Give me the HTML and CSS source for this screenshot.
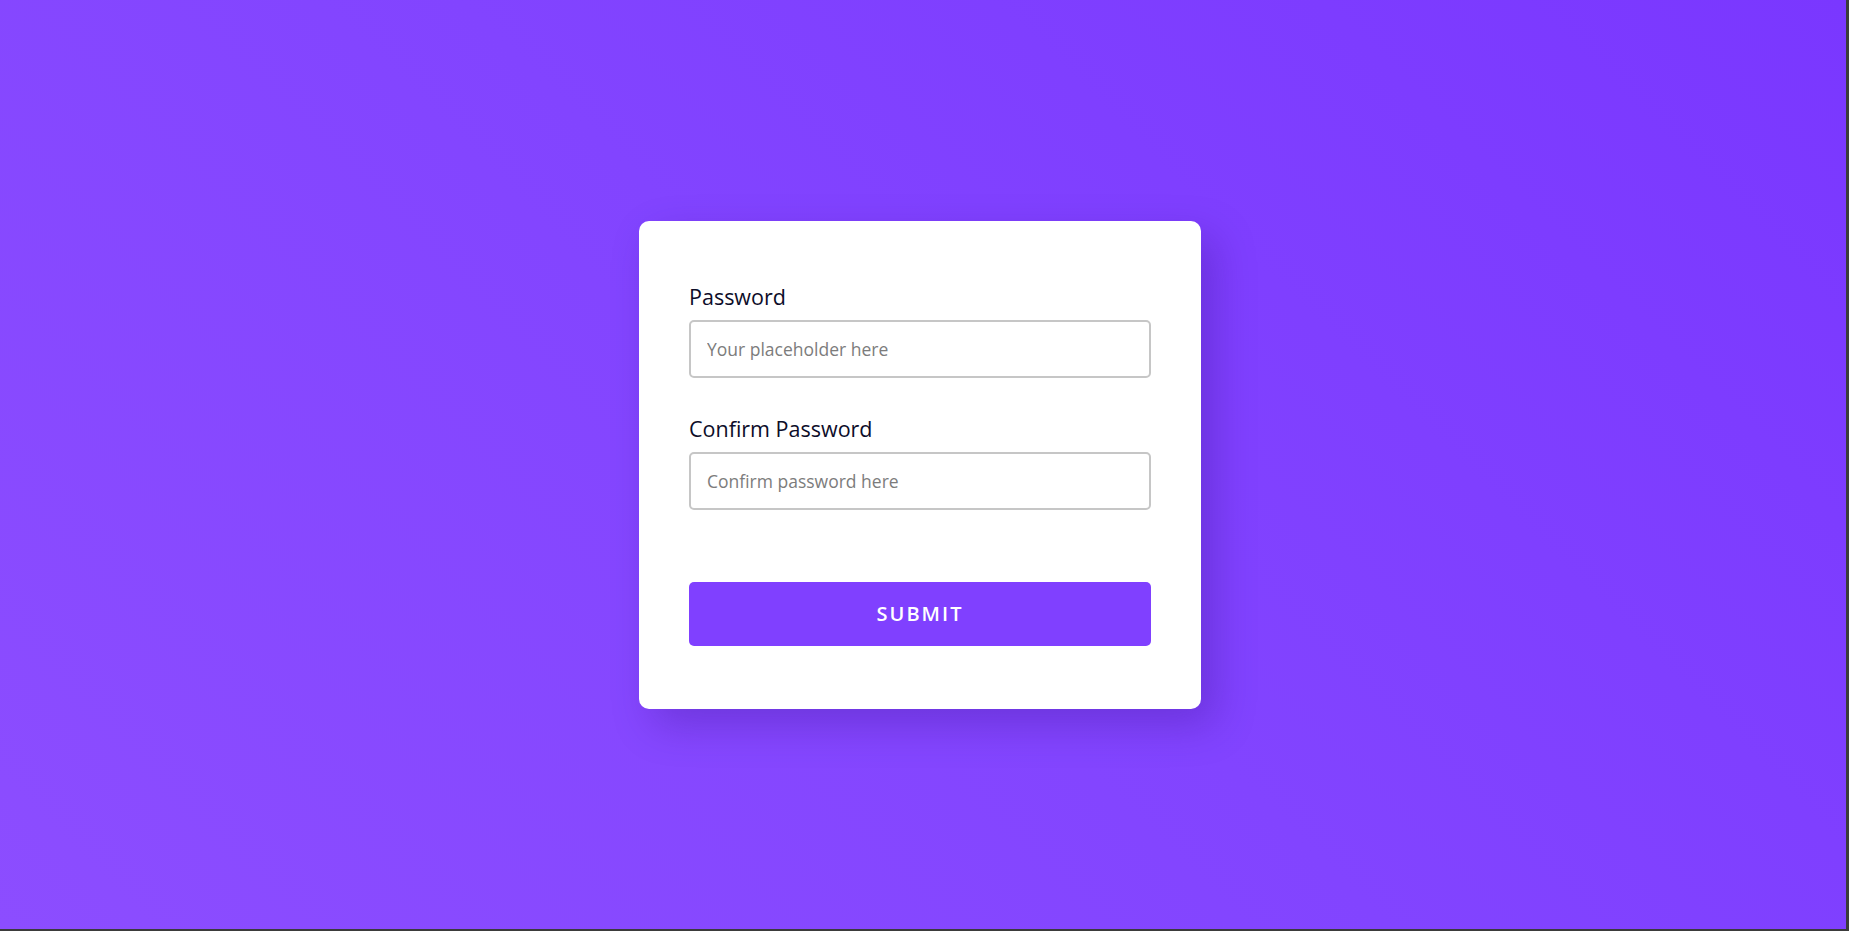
FILE: index.html
```html
<!DOCTYPE html>
<html lang="en">
<head>
<meta charset="utf-8">
<title>Password</title>
<link rel="stylesheet" href="styles.css">
</head>
<body>
<main class="page">
  <form class="card">
    <div class="field">
      <label class="label" for="pw">Password</label>
      <input class="input" id="pw" type="password" placeholder="Your placeholder here">
    </div>
    <div class="field">
      <label class="label" for="cpw">Confirm Password</label>
      <input class="input" id="cpw" type="password" placeholder="Confirm password here">
    </div>
    <button class="submit" type="button">SUBMIT</button>
  </form>
</main>
</body>
</html>
```
FILE: styles.css
```css
html {
  background: #3b3b3b;
  height: 100%;
}
body {
  margin: 0;
  height: 100%;
  font-family: "Open Sans", "Noto Sans", sans-serif;
}
.page {
  box-sizing: border-box;
  width: calc(100% - 3px);
  height: calc(100% - 2px);
  padding-right: 6px;
  display: flex;
  align-items: center;
  justify-content: center;
  background: linear-gradient(45deg, #8c4dff 0%, #8244ff 50%, #7a37ff 100%);
}
.card {
  box-sizing: border-box;
  width: 562px;
  padding: 61px 50px 63px;
  background: #ffffff;
  border-radius: 10px;
  box-shadow: 14px 16px 40px rgba(50, 10, 130, 0.28);
  display: flex;
  flex-direction: column;
}
.field {
  display: flex;
  flex-direction: column;
  gap: 8px;
}
.field + .field {
  margin-top: 36px;
}
.label {
  font-size: 21.5px;
  line-height: 30px;
  font-weight: 500;
  color: #0d0d29;
}
.input {
  box-sizing: border-box;
  height: 58px;
  width: 100%;
  border: 2px solid #c6c6c6;
  border-radius: 5px;
  padding: 0 16px;
  font-family: inherit;
  font-size: 17.5px;
  color: #333;
  outline: none;
}
.input::placeholder {
  color: #7c7c7c;
}
.submit {
  margin-top: 72px;
  height: 64px;
  border: none;
  border-radius: 5px;
  background: #8040ff;
  color: #ffffff;
  font-family: inherit;
  font-size: 20px;
  font-weight: 600;
  letter-spacing: 2px;
  cursor: pointer;
}
```
